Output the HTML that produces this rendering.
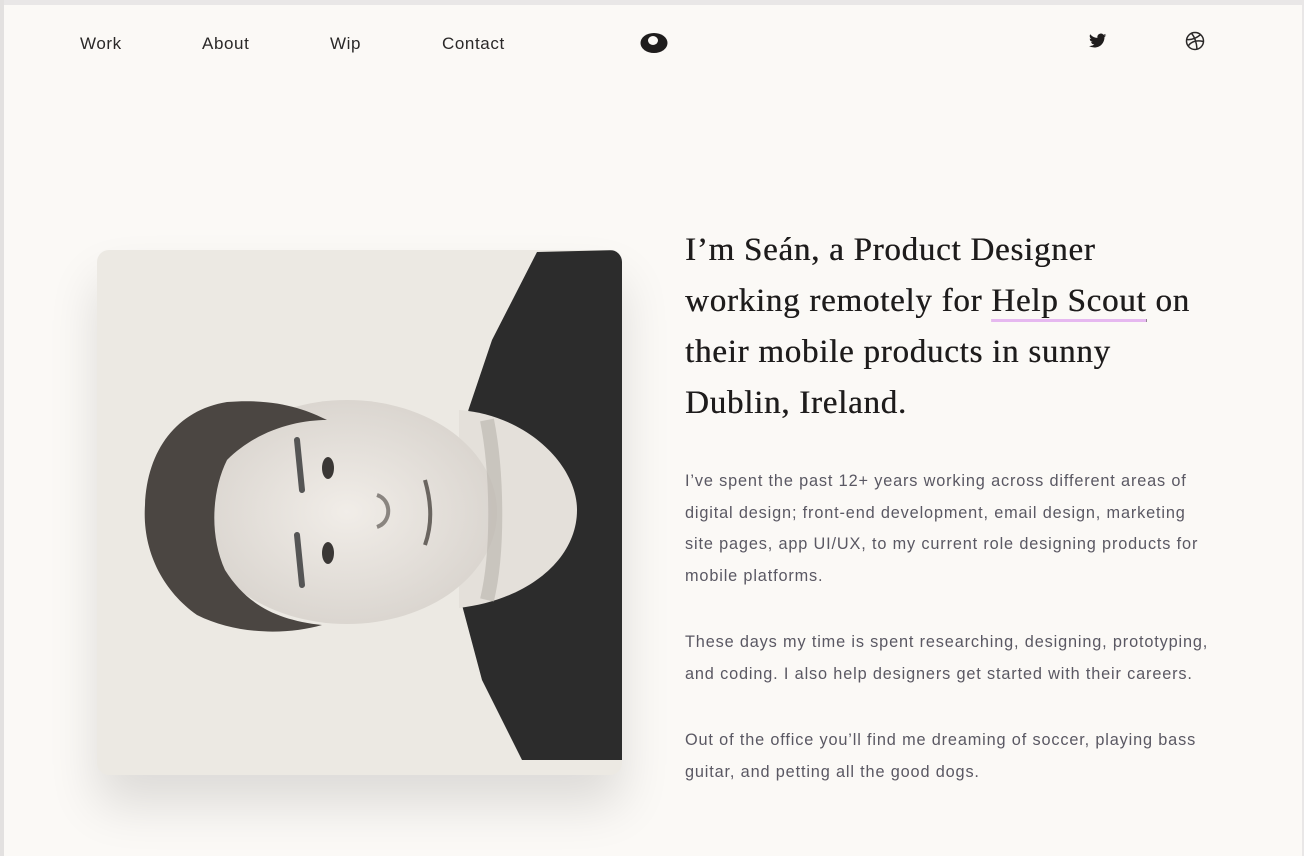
<!DOCTYPE html>
<html><head><meta charset="utf-8"><style>
html,body{margin:0;padding:0}
body{width:1304px;height:856px;background:#fbf9f6;position:relative;overflow:hidden;font-family:"Liberation Sans",sans-serif}
.topbar{position:absolute;left:0;top:0;width:1304px;height:5px;background:#e9e7e7}
.leftbar{position:absolute;left:0;top:0;width:4px;height:856px;background:#e3e1e0}
.rightbar{position:absolute;right:0;top:0;width:2px;height:856px;background:#e9e7e7}
.nav{position:absolute;top:34px;font-size:17px;color:#2a2828;line-height:20px;letter-spacing:0.6px}
h1{position:absolute;left:685px;top:225px;margin:0;font-family:"Liberation Serif",serif;font-weight:normal;font-size:33px;line-height:51px;color:#1e1c1c;letter-spacing:0.75px;white-space:nowrap;text-shadow:0.4px 0 0 #1e1c1c}
.ul{text-decoration:underline;text-decoration-color:#e6b8f0;text-decoration-thickness:3px;text-underline-offset:8px}
.p{position:absolute;left:685px;margin:0;font-size:16.3px;line-height:31.5px;color:#5a5863;white-space:nowrap;letter-spacing:0.85px}
.photo{position:absolute;left:97px;top:250px;width:525px;height:525px;border-radius:12px;overflow:hidden;background:#ece9e3;box-shadow:0 30px 50px rgba(0,0,0,0.12)}
</style></head><body>
<div class="topbar"></div><div class="leftbar"></div><div class="rightbar"></div>
<div class="nav" style="left:80px">Work</div>
<div class="nav" style="left:202px">About</div>
<div class="nav" style="left:330px">Wip</div>
<div class="nav" style="left:442px">Contact</div>
<svg style="position:absolute;left:640px;top:32px" width="28" height="22" viewBox="0 0 28 22"><ellipse cx="14" cy="11" rx="13.5" ry="10" fill="#1f1d1d"/><ellipse cx="13" cy="8.5" rx="5" ry="4.5" fill="#fbf9f6"/></svg>
<svg style="position:absolute;left:1089px;top:33px" width="18" height="16" viewBox="0 0 24 20"><path d="M23 2.3a9.4 9.4 0 0 1-2.7.8 4.7 4.7 0 0 0 2-2.6 9.4 9.4 0 0 1-3 1.1A4.7 4.7 0 0 0 11.3 5.9 13.4 13.4 0 0 1 1.6 1a4.7 4.7 0 0 0 1.5 6.3A4.6 4.6 0 0 1 1 6.7a4.7 4.7 0 0 0 3.8 4.6 4.7 4.7 0 0 1-2.1.1 4.7 4.7 0 0 0 4.4 3.3A9.5 9.5 0 0 1 0 16.6 13.4 13.4 0 0 0 7.2 18.7c8.7 0 13.4-7.2 13.4-13.4v-.6A9.6 9.6 0 0 0 23 2.3z" fill="#1f1d1d"/></svg>
<svg style="position:absolute;left:1185px;top:31px" width="20" height="20" viewBox="0 0 20 20" fill="none" stroke="#2a2828" stroke-width="1.5"><circle cx="10" cy="10" r="8.5"/><path d="M6.5 2.3c3 3.5 5 8.5 5.5 15.8M2 8.5c4 .5 9-1 13.5-4.8M3.5 14.5c3-4 8-5.5 14.8-4"/></svg>
<div class="photo"><svg width="525" height="525" viewBox="0 0 525 525">
<defs><radialGradient id="f" cx="0.5" cy="0.5" r="0.6"><stop offset="0" stop-color="#f1ede8"/><stop offset="1" stop-color="#d6d1cb"/></radialGradient></defs>
<path d="M440 2 L525 0 L525 510 L425 510 L385 430 L365 355 L368 170 L395 90 L440 2Z" fill="#2c2c2c"/>
<path d="M362 160 C430 165 480 215 480 260 C480 310 430 350 362 358 Z" fill="#e4e0da"/>
<ellipse cx="250" cy="262" rx="150" ry="112" fill="url(#f)"/>
<path d="M48 255 C50 200 80 160 130 152 C180 148 210 160 230 170 C200 170 160 180 130 210 C115 240 112 285 128 320 C150 355 180 370 225 375 C190 385 140 385 100 365 C65 340 45 300 48 255Z" fill="#4b4642"/>
<path d="M200 190 L205 240 M200 285 L205 335" stroke="#555" stroke-width="6" stroke-linecap="round"/>
<ellipse cx="231" cy="218" rx="6" ry="11" fill="#3a3735"/>
<ellipse cx="231" cy="303" rx="6" ry="11" fill="#3a3735"/>
<path d="M280 245 C295 250 295 272 280 277" stroke="#8a8580" stroke-width="4" fill="none"/>
<path d="M328 230 C335 255 335 275 328 295" stroke="#6a6560" stroke-width="4" fill="none"/>
<path d="M390 170 C400 220 402 300 390 350" stroke="#b8b2ab" stroke-width="14" fill="none" opacity="0.6"/>
</svg></div>
<h1>I’m Seán, a Product Designer<br>working remotely for <span class="ul">Help Scout</span> on<br>their mobile products in sunny<br>Dublin, Ireland.</h1>
<p class="p" style="top:466px">I’ve spent the past 12+ years working across different areas of<br>digital design; front-end development, email design, marketing<br>site pages, app UI/UX, to my current role designing products for<br>mobile platforms.</p>
<p class="p" style="top:627px">These days my time is spent researching, designing, prototyping,<br>and coding. I also help designers get started with their careers.</p>
<p class="p" style="top:725px">Out of the office you’ll find me dreaming of soccer, playing bass<br>guitar, and petting all the good dogs.</p>
</body></html>
